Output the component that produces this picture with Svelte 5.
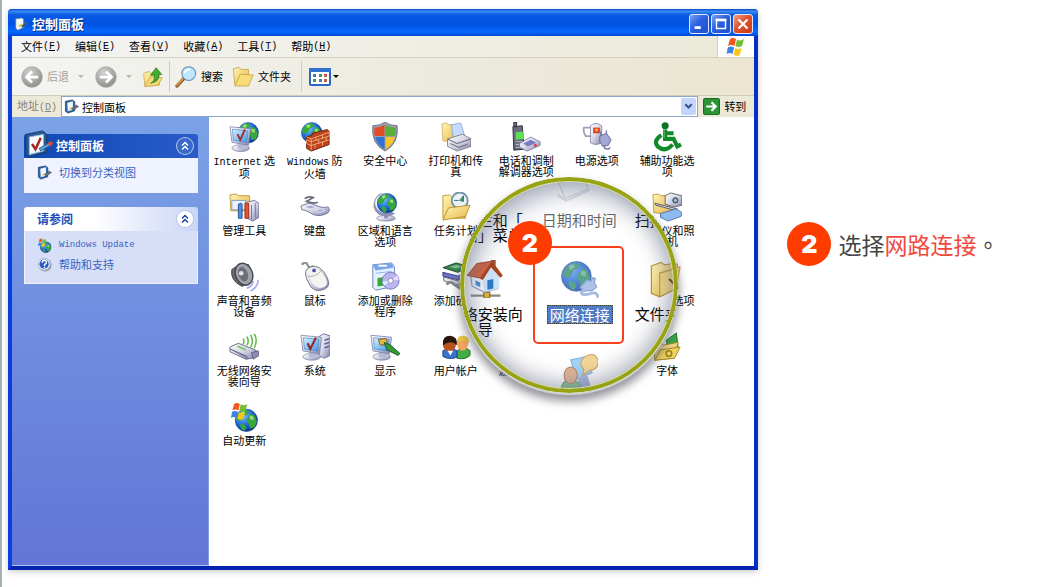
<script>
	const menus = [
		['文件', 'F'],
		['编辑', 'E'],
		['查看', 'V'],
		['收藏', 'A'],
		['工具', 'T'],
		['帮助', 'H']
	];

	// empty entries are the cells covered by the magnifier
	const items = [
		{ icon: 'internet', latin: 'Internet', lines: [' 选', '项'] },
		{ icon: 'firewall', latin: 'Windows', lines: [' 防', '火墙'] },
		{ icon: 'shield', lines: ['安全中心'] },
		{ icon: 'printer', lines: ['打印机和传', '真'] },
		{ icon: 'phone', lines: ['电话和调制', '解调器选项'] },
		{ icon: 'power', lines: ['电源选项'] },
		{ icon: 'access', lines: ['辅助功能选', '项'] },
		{ icon: 'tools', lines: ['管理工具'] },
		{ icon: 'keyboard', lines: ['键盘'] },
		{ icon: 'region', lines: ['区域和语言', '选项'] },
		{ icon: 'tasks', lines: ['任务计划'] },
		null,
		null,
		{ icon: 'scanner', lines: ['扫描仪和照', '相机'] },
		{ icon: 'sound', lines: ['声音和音频', '设备'] },
		{ icon: 'mouse', lines: ['鼠标'] },
		{ icon: 'programs', lines: ['添加或删除', '程序'] },
		{ icon: 'hardware', lines: ['添加硬件'] },
		null,
		null,
		{ icon: 'folder', lines: ['文件夹选项'] },
		{ icon: 'wireless', lines: ['无线网络安', '装向导'] },
		{ icon: 'system', lines: ['系统'] },
		{ icon: 'display', lines: ['显示'] },
		{ icon: 'users', lines: ['用户帐户'] },
		{ icon: 'blank', lines: ['游戏控制器'] },
		null,
		{ icon: 'fonts', lines: ['字体'] },
		{ icon: 'update', lines: ['自动更新'] }
	];

	const lensIcons = [
		{ icon: 'dateface', x: 94, y: -6, faded: true },
		{ icon: 'house', x: 6, y: 83 },
		{ icon: 'network', x: 101, y: 84, soft: true },
		{ icon: 'folder', x: 189, y: 83 },
		{ icon: 'talk', x: 100, y: 177, soft: true }
	];
	const lensLabels = [
		{ lines: ['务栏和「', '始」菜单'], x: 3, y: 35 },
		{ lines: ['日期和时间'], x: 82, y: 35, faded: true },
		{ lines: ['扫描仪'], x: 175, y: 35 },
		{ lines: ['网络安装向', '导'], x: -12, y: 129, center: true },
		{ lines: ['文件夹'], x: 175, y: 129 }
	];
</script>

{#snippet icon(name, size)}
	<svg class="icon" width={size} height={size} viewBox="0 0 32 32" aria-hidden="true"><use href="#{name}" /></svg>
{/snippet}

<svg class="defs" width="0" height="0" aria-hidden="true">
	<defs>
		<radialGradient id="sea" cx=".35" cy=".3" r=".75">
			<stop offset="0" stop-color="#7cc4ff" />
			<stop offset=".5" stop-color="#2674dc" />
			<stop offset="1" stop-color="#0b2f8c" />
		</radialGradient>
		<linearGradient id="metal" x1="0" y1="0" x2="1" y2="1">
			<stop offset="0" stop-color="#fff" />
			<stop offset=".5" stop-color="#d5d5e6" />
			<stop offset="1" stop-color="#7f80a8" />
		</linearGradient>
		<linearGradient id="paper" x1="0" y1="0" x2="1" y2="1">
			<stop offset="0" stop-color="#fff6b8" />
			<stop offset="1" stop-color="#e6b645" />
		</linearGradient>
		<linearGradient id="glass" x1="0" y1="0" x2="1" y2="1">
			<stop offset="0" stop-color="#d8f4ff" />
			<stop offset="1" stop-color="#3f94e8" />
		</linearGradient>
		<radialGradient id="grayball" cx=".4" cy=".3" r=".8">
			<stop offset="0" stop-color="#d4d4d2" />
			<stop offset="1" stop-color="#858585" />
		</radialGradient>
		<symbol id="globe" viewBox="0 0 20 20">
			<circle cx="10" cy="10" r="9.5" fill="url(#sea)" stroke="#1c4a9c" stroke-width=".6" />
			<path d="M5 3l4-2 3 1-1 3-3 1-1 3-3 2-3-2q0-4 4-6zM13 4l4 2 2 5-2 5-4 1-1-4-2-2 1-3 2-1zM5 13l4 1 1 3-2 2q-4-2-3-6z" fill="#38a83c" />
			<path d="M5 3l3-1 1 2-3 2zM13 6l3 1 0 3-3-1z" fill="#9ce072" />
		</symbol>
		<symbol id="monitor" viewBox="0 0 24 28">
			<ellipse cx="12" cy="24" rx="9" ry="3.5" fill="url(#metal)" stroke="#7b7ea5" stroke-width=".7" />
			<path d="M9 17l7 1 1 6q-5 2-8 0z" fill="#b6b9d3" />
			<path d="M1 2l21 2-2 17-17-3z" fill="url(#metal)" stroke="#7180aa" stroke-width=".8" />
			<path d="M3.500 4.500l16 1.700-1.500 12-13.500-2.200z" fill="url(#glass)" stroke="#3b7cc2" stroke-width=".6" />
		</symbol>
		<symbol id="flag" viewBox="0 0 20 20">
			<path d="M4 2q3-2 6 0L8.500 9q-3-2-6.500 0z" fill="#f2561f" />
			<path d="M11 2.500q3 2 7-.5l-2 7q-3 2-6.500 0z" fill="#75bd32" />
			<path d="M1.800 10.500q3-2 6.300 0L6.500 17q-3-2-6 0z" fill="#3c83e8" />
			<path d="M9.200 11q3 2 6.500 0l-2 7q-3 2-6.300-.5z" fill="#f8c51c" />
		</symbol>
		<symbol id="blank" viewBox="0 0 32 32"></symbol>
		<symbol id="panel" viewBox="0 0 32 32">
			<path d="M1 5L20 1l5 4v20L6 31l-5-3z" fill="#245c98" stroke="#16375f" />
			<path d="M5 8l16-3v19L5 28z" fill="#f7fbff" stroke="#9ec0e2" />
			<path d="M8 16l4 6 6-13" fill="none" stroke="#a7271c" stroke-width="2.800" />
			<path d="M16 21l11-6 3 2-12 7z" fill="#5f9cd8" stroke="#2c5c96" />
			<path d="M26 14l5-1 1 3-4 3z" fill="#d84a3c" />
		</symbol>
		<symbol id="panelsmall" viewBox="0 0 32 32">
			<path d="M3 5l15-3 5 4v19L8 30l-5-4z" fill="#2a68aa" stroke="#173c6c" stroke-width="1.500" />
			<path d="M7 8l12-3v18L8 26z" fill="#f2f7ff" />
			<path d="M10 20l8-3v4l-6 2z" fill="#ddd16b" />
			<path d="M16 20l10-7 5 3-12 8z" fill="#67748c" stroke="#303e59" />
		</symbol>
		<symbol id="paneltitle" viewBox="0 0 32 32">
			<path d="M4 4l14-2 4 3v19L9 30l-5-4z" fill="#f3f8f4" stroke="#4c7ca0" stroke-width="1.500" />
			<path d="M10 18l8-3v6l-6 3z" fill="#d8d268" />
			<path d="M17 20l10-8 4 3-12 10z" fill="#33475e" stroke="#8ba9c4" />
		</symbol>
		<symbol id="internet" viewBox="0 0 32 32">
			<use href="#globe" x="9" y="0" width="23" height="23" />
			<use href="#monitor" x="0" y="3" width="25" height="29" />
			<path d="M9 13l3 6 5-11" fill="none" stroke="#a32a2a" stroke-width="2" />
		</symbol>
		<symbol id="firewall" viewBox="0 0 32 32">
			<use href="#globe" x="1" y="0" width="23" height="23" />
			<path d="M7 16l6-2 0-2 16-4 2 2v14L12 31l-5-3z" fill="#bd4318" stroke="#6c1f0a" />
			<path d="M7 16l5 2 19-7v4l-19 6-5-2v4l5 2 19-6M12 18v12M17 16v4M24 14v4M20 19v4M28 16v4M16 24v4M24 21v4" fill="none" stroke="#f7b58a" stroke-width=".9" />
		</symbol>
		<symbol id="shield" viewBox="0 0 32 32">
			<path d="M16 0q5 4 13 4 2 19-13 27Q1 23 3 4q8 0 13-4z" fill="#9a9fb0" stroke="#6a7084" />
			<path d="M15.500 3v12H5q-1-5-.2-9 6 0 10.700-3z" fill="#e34a25" />
			<path d="M16.500 3v12H27q1-5 .2-9-6 0-10.700-3z" fill="#59ae3a" />
			<path d="M5.500 16h10v13Q8 25 5.500 16z" fill="#2d72d6" />
			<path d="M26.500 16h-10v13q8-4 10-13z" fill="#f5c427" />
		</symbol>
		<symbol id="printer" viewBox="0 0 32 32">
			<path d="M1 2l5-1 2 2 9 0v19L2 20z" fill="url(#paper)" stroke="#c39d3e" stroke-width=".7" />
			<path d="M11 3l10-2 4 13-12 3z" fill="#c4dcff" stroke="#7b9bc8" stroke-width=".8" />
			<path d="M7 18l16-5 9 5v8l-15 5-10-5z" fill="url(#metal)" stroke="#6c6d7e" stroke-width=".8" />
			<path d="M7 18l10 5 15-5M10 23l9 4 9-3" fill="none" stroke="#5d5e6e" />
		</symbol>
		<symbol id="phone" viewBox="0 0 32 32">
			<path d="M3 0h3v5h-3zM2 5l10-1 2 25-11 1z" fill="#6a6a80" stroke="#2e2e3e" />
			<path d="M5 11l8-1 1 8-9 1z" fill="#5be055" />
			<path d="M5 21h7M5 24h7M5 27h7" stroke="#bcbccc" />
			<path d="M9 23l12-7 10 5v4l-14 6-8-4z" fill="url(#metal)" stroke="#6b6c9b" stroke-width=".8" />
			<path d="M13 23l8-4 6 3-9 4z" fill="#777cc4" /><circle cx="26" cy="25" r="1.500" fill="#d33" />
		</symbol>
		<symbol id="power" viewBox="0 0 32 32">
			<path d="M2 6h10v9H4q-3-4-2-9z" fill="none" stroke="#a1a2b9" stroke-width="2" />
			<path d="M9 4q6-5 12 0v18q-6 4-12 0z" fill="url(#metal)" stroke="#7e7fa0" stroke-width=".8" />
			<rect x="12" y="6" width="7" height="6" fill="#dc3827" /><path d="M14 7h3v3h-3z" fill="#f9b72b" />
			<path d="M19 15l7-3 5 7-3 6-6 1-3-5z" fill="#a4a6d4" stroke="#666997" />
			<path d="M24 25v3q5 2 6-1M20 14v-4M26 12V9" fill="none" stroke="#777aa4" stroke-width="1.500" />
		</symbol>
		<symbol id="access" viewBox="0 0 32 32">
			<circle cx="14" cy="4" r="3.800" fill="#0c7424" />
			<path d="M14 8v10h9l4 8 4-2M15 12h8M10 14q-9 6-4 12 8 7 16-2" fill="none" stroke="#118b2a" stroke-width="4.400" />
			<path d="M13 8v9" stroke="#5cc45b" stroke-width="1" />
		</symbol>
		<symbol id="tools" viewBox="0 0 32 32">
			<path d="M1 3l7-1 2 2h12v16H2z" fill="url(#paper)" stroke="#c29a37" />
			<path d="M3 9h15v10H3z" fill="#e9f0ff" stroke="#849dc3" />
			<path d="M18 11l9-2 5 3v15l-7 4-7-4z" fill="url(#metal)" stroke="#6d719c" />
			<path d="M24 14v15M28 12v15" stroke="#6a72b4" />
			<path d="M10 13q3-2 4 0v15h-4z" fill="#4f8ed8" stroke="#275398" /><path d="M17 12h4v16h-4z" fill="#e85129" stroke="#982b14" />
		</symbol>
		<symbol id="keyboard" viewBox="0 0 32 32">
			<path d="M5 7q4-3 9-1l-7 4q8 3 12 1" fill="none" stroke="#676779" stroke-width="1.800" />
			<path d="M1 15q9-5 15-1 8 4 14 2 3 3 0 6-8 5-16 2-8-5-12-5z" fill="url(#metal)" stroke="#70719b" />
			<path d="M5 15l8-1 3 3-6 1zM16 19l7-1 3 2-5 2z" fill="#a9abd0" stroke="#e4e4f4" />
		</symbol>
		<symbol id="region" viewBox="0 0 32 32">
			<ellipse cx="17" cy="28" rx="10" ry="3" fill="url(#metal)" stroke="#7679a1" stroke-width=".7" />
			<path d="M14 1q-12 6-7 16 6 8 16 4l4 2q-8 6-18 1Q0 16 6 6q3-5 8-5z" fill="#8f95b7" />
			<path d="M15 22h4v6h-4z" fill="#8d92b4" />
			<use href="#globe" x="7" y="1" width="22" height="22" />
		</symbol>
		<symbol id="tasks" viewBox="0 0 32 32">
			<path d="M2 4l7-1 2 2h15v23H2z" fill="url(#paper)" stroke="#c29a37" />
			<circle cx="20" cy="9" r="8.500" fill="#eaf3f8" stroke="#7495a5" stroke-width="2" />
			<path d="M20 9l4-5v6zM14 9h5" fill="#42a04c" stroke="#3e6c80" />
			<path d="M2 30l6-13 23-3-5 12z" fill="url(#paper)" stroke="#bd922e" />
		</symbol>
		<symbol id="scanner" viewBox="0 0 32 32">
			<path d="M1 3l6-1 2 2 10 0v20L2 22z" fill="url(#paper)" stroke="#c19b3c" />
			<path d="M14 4l6-3 12 3v10l-8 2-10-3z" fill="url(#metal)" stroke="#636675" />
			<circle cx="25" cy="9" r="4" fill="#596174" stroke="#d8dce5" /><circle cx="25" cy="9" r="1.500" fill="#a8cff4" />
			<path d="M3 12l24 6-1 2-22-6z" fill="#d8dce8" stroke="#525668" />
			<path d="M9 23l17-5 6 4-1 4-14 5-8-4z" fill="#8fbaf1" stroke="#5574a8" />
		</symbol>
		<symbol id="sound" viewBox="0 0 32 32">
			<path d="M3 8l9-6 9 1v19l-7 4Q1 20 3 8z" fill="#676a70" stroke="#404247" />
			<ellipse cx="16" cy="13" rx="9" ry="12" transform="rotate(-20 16 13)" fill="#a1a3aa" stroke="#46484e" stroke-width="1.500" />
			<ellipse cx="15" cy="13" rx="5" ry="8" transform="rotate(-20 15 13)" fill="#6d7078" /><circle cx="13" cy="12" r="2.500" fill="#dfe1e4" />
			<path d="M19 28q6-2 7-8M23 31q8-4 8-12" fill="none" stroke="#a8aaf0" stroke-width="1.800" />
		</symbol>
		<symbol id="mouse" viewBox="0 0 32 32">
			<path d="M2 3q4-5 6 0t6 1" fill="none" stroke="#92949b" stroke-width="2.500" />
			<path d="M7 8q9-8 18 2 11 15 1 19-12 5-17-7-5-9-2-14z" fill="url(#metal)" stroke="#74757b" />
			<path d="M10 9q7-5 14 3 9 12 1 15-9 3-14-8z" fill="#f4f4f1" />
			<path d="M8 15q8 2 15-6" fill="none" stroke="#aaaab4" /><circle cx="15" cy="9" r="2" fill="#4b55a8" />
		</symbol>
		<symbol id="programs" viewBox="0 0 32 32">
			<path d="M3 3l20-2 3 4v21L6 30l-3-3z" fill="#e7f0ff" stroke="#6482b8" />
			<path d="M3 3l20-2 2 5L6 9z" fill="#79a5ed" /><path d="M9 4h9" stroke="#fff" stroke-width="2" />
			<path d="M8 17l7-1v9l-7 1z" fill="#35a936" /><path d="M6 12l17-2" stroke="#8ab5f2" />
			<circle cx="22" cy="20" r="9" fill="#bbb6ef" stroke="#7c78bd" /><path d="M22 20l7-6 2 5z" fill="#eed9ff" /><path d="M22 20l-7 5-2-4z" fill="#d9f2ff" />
			<circle cx="22" cy="20" r="2.700" fill="#fff" stroke="#8c86bd" />
		</symbol>
		<symbol id="hardware" viewBox="0 0 32 32">
			<path d="M2 6l14-5 14 4-12 6z" fill="#35874b" stroke="#184828" /><path d="M9 5l8-2 6 2-7 2z" fill="#86b99a" />
			<path d="M2 11l16 4 12-5v4l-12 5-16-4z" fill="#6f75cb" stroke="#373b84" />
			<path d="M3 16l14 4 13-5v4l-12 6-15-5z" fill="url(#metal)" stroke="#5d5e6c" />
			<path d="M6 24q4-5 8 0l8 5" fill="none" stroke="#85858e" stroke-width="3" />
		</symbol>
		<symbol id="folder" viewBox="0 0 32 32">
			<path d="M2 5l8-3 3 2 14-2v20L9 31l-7-3z" fill="url(#paper)" stroke="#b99339" />
			<path d="M9 11l21-6-3 17L9 31z" fill="#f8dc83" stroke="#c49b3b" />
			<path d="M17 16l9 9" stroke="#6f3c18" stroke-width="2" />
		</symbol>
		<symbol id="wireless" viewBox="0 0 32 32">
			<path d="M15 7q2 3 0 6M19 5q3 5 0 9M23 3q4 7 0 13M27 2q4 7 0 15" fill="none" stroke="#5eb844" stroke-width="1.600" />
			<path d="M1 16l9-4 18 7 3 4-6 5-7 1-17-8z" fill="url(#metal)" stroke="#6a6b87" />
			<path d="M1 18l18 8v3M24 22l7-2 1 5-6 4z" fill="#8a8db8" stroke="#5c5e7a" /><path d="M9 15l9 4" stroke="#81c46b" stroke-width="2" />
		</symbol>
		<symbol id="system" viewBox="0 0 32 32">
			<path d="M20 5l5-3 7 2v21l-6 3-6-3z" fill="url(#metal)" stroke="#6e72a3" /><path d="M26 9l5-2M26 13l5-2M26 17l5-2" stroke="#525b94" stroke-width="1.500" />
			<use href="#monitor" x="0" y="1" width="25" height="30" />
			<path d="M8 12l3 6 6-12" fill="none" stroke="#972422" stroke-width="2.300" />
		</symbol>
		<symbol id="display" viewBox="0 0 32 32">
			<use href="#monitor" x="0" y="1" width="25" height="30" />
			<path d="M9 8l8-1 2 6-8 1z" fill="#e8b842" stroke="#795f27" /><path d="M15 11l7 3 10 9-2 2-12-6z" fill="#35993a" stroke="#195c25" />
		</symbol>
		<symbol id="users" viewBox="0 0 32 32">
			<path d="M17 28V20q8-6 14 0v5q-5 5-14 3z" fill="#44ad46" stroke="#23702c" /><ellipse cx="23" cy="12" rx="6" ry="8" fill="#f4a35c" /><path d="M17 11q0-8 7-7 7 1 6 8-5-5-13-1z" fill="#e8c24b" />
			<path d="M2 26v-6q8-5 15 0v7q-9 3-15-1z" fill="#3974d1" stroke="#1f4289" /><ellipse cx="9" cy="13" rx="7" ry="8" fill="#b6531e" /><path d="M2 14q-1-10 8-10 8 1 7 10-6-6-15 0z" fill="#27150e" />
			<path d="M7 20l3 5 3-5" fill="#fff" />
		</symbol>
		<symbol id="fonts" viewBox="0 0 32 32">
			<path d="M15 9L26 1l2 17H17z" fill="#37a942" stroke="#1b702b" />
			<path d="M2 15l8-3 2 2 16-3-5 17-20 2z" fill="url(#paper)" stroke="#a88423" />
			<path d="M3 30l6-11 21-3-6 12z" fill="#edd35c" stroke="#a88423" /><circle cx="18" cy="23" r="3" fill="none" stroke="#9b8322" stroke-width="1.800" />
		</symbol>
		<symbol id="update" viewBox="0 0 32 32">
			<use href="#globe" x="6" y="7" width="25" height="25" />
			<use href="#flag" x="0" y="0" width="23" height="20" />
		</symbol>
		<symbol id="house" viewBox="0 0 32 32">
			<path d="M4 30h25" stroke="#8a8c80" stroke-width="2" /><path d="M15 27h5v5h-5z" fill="#e4b23c" stroke="#8b702a" />
			<path d="M4 12l9-6 14 7v11l-12 3-10-5z" fill="#f5f8ff" stroke="#92a5c2" /><path d="M14 15l8-11 6 11v9l-13 3z" fill="#cfe3fa" />
			<path d="M1 13L9 3l13-2-9 15-2-1z" fill="#d26440" stroke="#903519" stroke-width=".7" /><path d="M22 1l9 12-2 2-8-9-7 11-2-2z" fill="#a9431f" />
			<path d="M21 1V0h4v5z" fill="#9b5137" /><path d="M18 17l5-1v8l-5 1z" fill="#2b7bc8" /><path d="M8 17l4 2v4l-4-2z" fill="#4391d6" />
		</symbol>
		<symbol id="network" viewBox="0 0 32 32">
			<use href="#globe" x="0" y="0" width="26" height="26" />
			<circle cx="13" cy="13" r="13" fill="#2f62c0" opacity=".4" />
			<path d="M16 22l6-6 3 1 2-3 2 1-1 3 2 4-4 3-7 0z" fill="#9ab2e0" stroke="#6a8cc6" />
			<path d="M22 25q-7 0-4 3 4 1 8-1 5-1 5 4" fill="none" stroke="#8fabd9" stroke-width="2.400" />
		</symbol>
		<symbol id="talk" viewBox="0 0 32 32">
			<path d="M9 5l14-3 4 14-13 5z" fill="#8ccaf6" stroke="#6da7da" />
			<path d="M20 3q9-6 12 2 1 8-7 9l-6 4 1-5q-5-5 0-10z" fill="#f2ce7e" stroke="#bd9750" />
			<path d="M15 21l8-3 4 12H15z" fill="#92a4db" /><path d="M1 31q0-9 8-9t9 9z" fill="#72b579" stroke="#569761" />
			<ellipse cx="9" cy="18" rx="5.500" ry="7" fill="#dba580" stroke="#a5724e" />
		</symbol>
		<symbol id="dateface" viewBox="0 0 32 32">
			<path d="M4 10l20-6 5 11-20 8z" fill="#f7f8fb" stroke="#bfc4cc" /><path d="M3 20l7 5 20-9" fill="none" stroke="#ccd0d8" stroke-width="2" />
		</symbol>
		<symbol id="openfolder" viewBox="0 0 32 32">
			<path d="M2 4l8-2 4 3 10 0v22H4z" fill="url(#paper)" stroke="#bd9634" /><path d="M4 29l8-17 19 1-7 16z" fill="#f8dc79" stroke="#bd9634" />
		</symbol>
		<symbol id="upfolder" viewBox="0 0 32 32">
			<path d="M1 10l9-3 3 3 13-1v20L3 31z" fill="url(#paper)" stroke="#bd9634" />
			<path d="M3 31l9-15 19 1-7 12z" fill="#f8dc79" stroke="#bd9634" />
			<path d="M12 26q8-4 6-13h-6L21 1l9 11h-5q2 12-13 14z" fill="#41aa2f" stroke="#207018" />
		</symbol>
		<symbol id="search" viewBox="0 0 32 32">
			<path d="M13 18L3 29" stroke="#84552b" stroke-width="5" stroke-linecap="round" /><path d="M11 19l-8 9" stroke="#e59c51" stroke-width="2.500" stroke-linecap="round" />
			<circle cx="20" cy="11" r="10" fill="#bfe6fc" stroke="#6789bd" stroke-width="1.500" /><path d="M14 10q2-5 8-5" fill="none" stroke="#fff" stroke-width="3" />
		</symbol>
		<symbol id="help" viewBox="0 0 32 32">
			<circle cx="17" cy="17" r="14" fill="#8a93a8" /><circle cx="15" cy="15" r="13" fill="#eaf0ff" stroke="#b2bdd2" stroke-width="2" />
			<circle cx="15" cy="15" r="10" fill="#2b5cc4" /><path d="M11 12q0-5 5-5 5 1 4 5 0 2-4 4v3M16 21v3" fill="none" stroke="#fff" stroke-width="3" />
		</symbol>
		<symbol id="back" viewBox="0 0 32 32">
			<circle cx="16" cy="16" r="15" fill="url(#grayball)" stroke="#a3a3a0" /><path d="M25 16H9M16 8l-8 8 8 8" fill="none" stroke="#fff" stroke-width="4" />
		</symbol>
		<symbol id="forward" viewBox="0 0 32 32">
			<circle cx="16" cy="16" r="15" fill="url(#grayball)" stroke="#a3a3a0" /><path d="M7 16h16M16 8l8 8-8 8" fill="none" stroke="#fff" stroke-width="4" />
		</symbol>
		<symbol id="go" viewBox="0 0 32 32">
			<rect x="1" y="1" width="30" height="30" rx="3" fill="#2b9434" stroke="#1d6a26" stroke-width="2" /><path d="M6 16h17M16 8l8 8-8 8" fill="none" stroke="#fff" stroke-width="4" />
		</symbol>
		<symbol id="views" viewBox="0 0 22 18">
			<rect x="1" y="1" width="20" height="16" rx="1" fill="#fff" stroke="#2e67bf" stroke-width="2" /><path d="M0 0h22v4H0z" fill="#2e6fd0" />
			<path d="M4 6h3v3H4zM10 11h3v3h-3z" fill="#447cc2" /><path d="M10 6h3v3h-3zM4 11h3v3H4z" fill="#3e9b56" /><path d="M15 6h3v3h-3zM15 11h3v3h-3z" fill="#c65c45" />
		</symbol>
		<symbol id="chevrons" viewBox="0 0 16 16">
			<path d="M5 7.500l3-3 3 3M5 11.500l3-3 3 3" fill="none" stroke="currentColor" stroke-width="1.500" />
		</symbol>
	</defs>
</svg>

<main>
	<section class="window" aria-label="控制面板">
		<header class="titlebar">
			{@render icon('paneltitle', 14)}
			<h1>控制面板</h1>
			<div class="controls">
				<button aria-label="最小化"><svg viewBox="0 0 20 20"><path d="M5 14h7" stroke="#fff" stroke-width="3" /></svg></button>
				<button aria-label="最大化"><svg viewBox="0 0 20 20"><path d="M5 5.500h10V15H5z" fill="none" stroke="#fff" stroke-width="1.500" /><path d="M4 5.500h12" stroke="#fff" stroke-width="3" /></svg></button>
				<button class="close" aria-label="关闭"><svg viewBox="0 0 20 20"><path d="M5 5l10 10M15 5L5 15" stroke="#fff" stroke-width="2.500" /></svg></button>
			</div>
		</header>

		<nav class="menubar">
			{#each menus as [label, key]}
				<button>{label}<span class="latin">(<u>{key}</u>)</span></button>
			{/each}
			<div class="brand">{@render icon('flag', 20)}</div>
		</nav>

		<div class="toolbar">
			<button class="off back">{@render icon('back', 22)}<span>后退</span></button>
			<i class="arrow off"></i>
			<button class="off forward" aria-label="前进">{@render icon('forward', 22)}</button>
			<i class="arrow off"></i>
			<button class="up" aria-label="向上">{@render icon('upfolder', 20)}</button>
			<i class="line"></i>
			<button class="find">{@render icon('search', 22)}<span>搜索</span></button>
			<button class="folders">{@render icon('openfolder', 22)}<span>文件夹</span></button>
			<i class="line"></i>
			<button class="views" aria-label="查看"><svg width="22" height="18"><use href="#views" /></svg><i class="arrow"></i></button>
		</div>

		<div class="address">
			<label for="path">地址<span class="latin">(<u>D</u>)</span></label>
			<div class="field">
				{@render icon('panelsmall', 15)}
				<input id="path" type="text" value="控制面板" />
				<button class="drop" aria-label="展开"><svg viewBox="0 0 14 14"><path d="M4 5l3 3 3-3" fill="none" stroke="#3a5690" stroke-width="2" /></svg></button>
			</div>
			<button class="go">{@render icon('go', 17)}转到</button>
		</div>

		<div class="body">
			<aside>
				<section class="box primary">
					<div class="boxhead">
						<span class="big">{@render icon('panel', 28)}</span>
						<h2>控制面板</h2>
						<button aria-label="折叠"><svg width="16" height="16"><use href="#chevrons" /></svg></button>
					</div>
					<div class="links">
						<a href="#category">{@render icon('panelsmall', 15)}切换到分类视图</a>
					</div>
				</section>
				<section class="box">
					<div class="boxhead">
						<h2>请参阅</h2>
						<button aria-label="折叠"><svg width="16" height="16"><use href="#chevrons" /></svg></button>
					</div>
					<div class="links">
						<a href="#update">{@render icon('update', 15)}<span class="latin">Windows Update</span></a>
						<a href="#help">{@render icon('help', 15)}帮助和支持</a>
					</div>
				</section>
			</aside>

			<div class="pane">
				<div class="items">
					{#each items as item}
						{#if item}
							<button class="item">
								{@render icon(item.icon, 30)}
								<span class="name">
									{#if item.latin}<span class="latin">{item.latin}</span>{/if}{#each item.lines as line, i}{#if i}<br />{/if}{line}{/each}
								</span>
							</button>
						{:else}
							<span></span>
						{/if}
					{/each}
				</div>

				<div class="lens">
					<div class="glass">
						{#each lensIcons as it}
							<div class="spot" class:soft={it.soft} class:faded={it.faded} style="left: {it.x}px; top: {it.y}px">{@render icon(it.icon, 38)}</div>
						{/each}
						{#each lensLabels as it}
							<div class="spot" class:faded={it.faded} class:center={it.center} style="left: {it.x}px; top: {it.y}px">
								{#each it.lines as line}<div>{line}</div>{/each}
							</div>
						{/each}
						<div class="haze"></div>
						<div class="picked">网络连接</div>
					</div>
					<div class="frame"></div>
					<div class="badge">2</div>
				</div>
			</div>
		</div>
	</section>

	<p class="step"><span class="badge">2</span><span>选择<em>网路连接</em>。</span></p>
</main>

<style>
	:global(body) {
		margin: 0;
		background: #fff;
	}
	main {
		display: grid;
		grid-template-columns: minmax(0, 23fr) minmax(0, 9fr);
		box-sizing: border-box;
		min-height: 100vh;
		padding: 9px 0 17px 6px;
		border-left: 2px solid #a3b1b4;
		font: 11px/11px "Noto Sans CJK SC", sans-serif;
		color: #000;
	}
	.defs {
		position: absolute;
	}
	.icon {
		display: block;
		flex: none;
	}
	button {
		display: flex;
		align-items: center;
		margin: 0;
		padding: 0;
		border: 0;
		background: none;
		font: inherit;
		color: inherit;
		white-space: nowrap;
	}
	.latin {
		font-family: "Liberation Mono", monospace;
		font-size: 10px;
		line-height: 1;
	}
	.window {
		display: flex;
		flex-direction: column;
		box-sizing: border-box;
		border: solid #0a3fdc;
		border-width: 0 4px 4px;
		border-bottom-color: #0424ae;
		border-right-color: #0430c8;
		border-radius: 4px 4px 0 0;
		background: #0a3fdc;
		box-shadow: 0 2px 6px rgba(0, 0, 0, .2);
	}

	/* title and bars */
	.titlebar {
		display: flex;
		align-items: center;
		gap: 4px;
		height: 27px;
		margin: 0 -4px;
		padding: 2px 5px 0 6px;
		box-sizing: border-box;
		border-radius: 4px 4px 0 0;
		background: linear-gradient(#0a45c8, #3a8cf4 8%, #0a5ae4 22%, #0053e2 55%, #0667ff 85%, #0048d0);
	}
	h1 {
		flex: 1;
		margin: 0;
		font-size: 13px;
		line-height: 18px;
		font-weight: 700;
		color: #fff;
		text-shadow: 1px 1px #0b2d82;
	}
	.controls {
		display: flex;
		gap: 2px;
	}
	.controls button {
		width: 20px;
		height: 20px;
		box-sizing: border-box;
		border: 1px solid #dfe8ff;
		border-radius: 3px;
		background: linear-gradient(135deg, #7b9ff4, #2a5fe0 45%, #1f50cf);
	}
	.controls .close {
		background: linear-gradient(135deg, #f2a185, #e0512c 45%, #c83a15);
	}
	.controls svg {
		width: 18px;
		height: 18px;
	}
	.menubar {
		display: flex;
		gap: 14px;
		height: 21px;
		padding-left: 9px;
		background: linear-gradient(90deg, #f3f4f3, #ece9d8);
		border-bottom: 1px solid #d6d2c2;
	}
	.brand {
		display: flex;
		align-items: center;
		justify-content: center;
		width: 36px;
		margin-left: auto;
		background: #fff;
		border-left: 1px solid #d6d2c2;
	}
	.toolbar {
		display: flex;
		align-items: center;
		height: 37px;
		padding-left: 9px;
		background: linear-gradient(100deg, #f4f4f2, #eceade 60%, #ece6d0);
		border-bottom: 1px solid #d0ccbc;
	}
	.toolbar button {
		gap: 4px;
	}
	.toolbar .off {
		color: #a3a39c;
	}
	.arrow {
		border: solid transparent;
		border-width: 3px 3px 0;
		border-top-color: #111;
	}
	.arrow.off {
		border-top-color: #b5b5ae;
		margin: 0 11px 0 9px;
	}
	.toolbar .up {
		margin: 0 6px 0 0;
	}
	.line {
		width: 1px;
		height: 31px;
		background: #cfccbd;
	}
	.find {
		margin: 0 9px 0 5px;
	}
	.folders {
		margin-right: 10px;
	}
	.views {
		margin-left: 7px;
	}
	.toolbar .views {
		gap: 2px;
	}
	.address {
		display: flex;
		align-items: center;
		height: 21px;
		padding-left: 5px;
		background: #ece9d8;
	}
	.address label {
		width: 44px;
		color: #85857c;
	}
	.field {
		display: flex;
		flex: 1;
		align-items: center;
		box-sizing: border-box;
		height: 21px;
		padding: 0 1px 0 2px;
		border: 1px solid #8ba6c8;
		background: #fff;
	}
	input {
		flex: 1;
		min-width: 0;
		padding: 0 0 0 3px;
		border: 0;
		outline: 0;
		font: inherit;
		line-height: 16px;
		color: inherit;
		background: none;
	}
	.drop {
		width: 15px;
		height: 17px;
		border-radius: 2px;
		background: #c5d4fb;
	}
	.go {
		width: 56px;
		gap: 4px;
		padding-left: 5px;
		box-sizing: border-box;
	}

	/* sidebar */
	.body {
		display: flex;
		flex: 1;
	}
	aside {
		width: 197px;
		flex: none;
		box-sizing: border-box;
		padding: 17px 10px 0 12px;
		border-right: 1px solid #7d9ee6;
		border-bottom: 1px solid #a9c4f4;
		background: linear-gradient(#7ba2e7, #6375d6);
	}
	.box {
		margin-bottom: 14px;
	}
	.boxhead {
		display: flex;
		align-items: center;
		height: 24px;
		padding: 0 5px 0 13px;
		border-radius: 3px 3px 0 0;
		background: linear-gradient(90deg, #fff 40%, #c9d5f6);
		color: #1f4fb8;
	}
	.primary .boxhead {
		padding-left: 1px;
		background: linear-gradient(90deg, #0f48b4, #2a5cc9);
		color: #fff;
	}
	.big {
		width: 31px;
		height: 32px;
	}
	h2 {
		flex: 1;
		margin: 0;
		font-size: 12px;
		line-height: 16px;
		font-weight: 700;
	}
	.boxhead button {
		width: 16px;
		height: 16px;
		border-radius: 50%;
		background: #fff;
		box-shadow: 0 0 0 1px #b9c6e6;
		color: #1f3f98;
	}
	.primary .boxhead button {
		background: #3a69cc;
		color: #fff;
	}
	.links {
		display: flex;
		flex-direction: column;
		gap: 4px;
		box-sizing: border-box;
		min-height: 53px;
		padding: 7px 0 0 12px;
		border: 1px solid #eef2fd;
		border-top: 0;
		background: #d6dff7;
	}
	.primary .links {
		min-height: 35px;
		background: #eff3ff;
	}
	a {
		display: flex;
		align-items: center;
		gap: 7px;
		color: #3a62c0;
		line-height: 15px;
		text-decoration: none;
	}
	a .latin {
		font-size: 9px;
	}

	/* icons pane */
	.pane {
		position: relative;
		flex: 1;
		padding: 5px 52px 0 0;
		background: #fff;
	}
	.items {
		display: grid;
		grid-template-columns: repeat(7, minmax(0, 1fr));
		grid-auto-rows: 70px;
	}
	.item {
		flex-direction: column;
		justify-content: flex-start;
		gap: 3px;
	}
	.name {
		min-width: max-content;
	}
	.lens {
		position: absolute;
		left: 46%;
		top: 60px;
		width: 218px;
		height: 216px;
		font-size: 15px;
		line-height: 15px;
	}
	.glass {
		position: absolute;
		inset: 0;
		overflow: hidden;
		border-radius: 50%;
		background: #fff;
		box-shadow: 0 2px 1px #d0d3d8, 0 7px 10px 1px rgba(70, 72, 85, .6);
	}
	.haze {
		position: absolute;
		inset: 0;
		border: 4px solid #98a314;
		border-radius: 50%;
		box-sizing: border-box;
		box-shadow: inset 0 0 0 1px #d9dfa4, inset 5px 9px 26px rgba(85, 98, 125, .5), inset -4px -6px 22px rgba(100, 106, 128, .4);
	}
	.spot {
		position: absolute;
		white-space: nowrap;
	}
	.center {
		text-align: center;
	}
	.soft {
		opacity: .8;
	}
	.faded {
		opacity: .6;
	}
	.picked {
		position: absolute;
		left: 87px;
		top: 128px;
		padding: 1px 2px;
		border: 1px dotted #3c3c28;
		background: #4f7cc4;
		color: #fff;
	}
	.frame {
		position: absolute;
		left: 73px;
		top: 69px;
		width: 91px;
		height: 98px;
		box-sizing: border-box;
		border: 2px solid #f9401c;
		border-radius: 5px;
	}
	.badge {
		display: flex;
		align-items: center;
		justify-content: center;
		width: 44px;
		height: 44px;
		flex: none;
		border-radius: 50%;
		background: #ff3c00;
		color: #fff;
		font: 900 25px/44px Inter, "Open Sans", sans-serif;
	}
	.lens .badge {
		position: absolute;
		left: 48px;
		top: 44px;
	}
	.step {
		display: flex;
		align-items: center;
		align-self: start;
		gap: 7px;
		margin: 213px 0 0 29px;
		font: 23px/32px "Noto Sans CJK TC", sans-serif;
		color: #444;
		white-space: nowrap;
	}
	em {
		font-style: normal;
		color: #f04a40;
	}
</style>
